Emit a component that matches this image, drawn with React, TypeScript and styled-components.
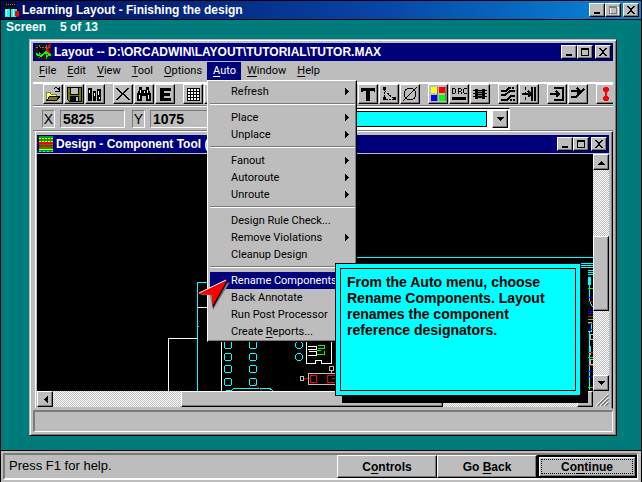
import React from "react";
import styled, { createGlobalStyle, css } from "styled-components";

const silver = "#bdbdbd";
const shade = "#7b7b7b";
const navy = "#00007b";
const teal = "#007b7b";
const aqua = "#00ffff";
const menuFont = 'Roboto, "Liberation Sans", sans-serif';

const GlobalStyle = createGlobalStyle`
  * { box-sizing: border-box; }
  body { margin: 0; background: #000; font-family: "Liberation Sans", Arial, sans-serif; color: #000; }
  button, input, select { font: inherit; color: inherit; border-radius: 0; margin: 0; }
  u { text-underline-offset: 2px; }
`;

const raised = css`
  background: ${silver};
  border: 1px solid;
  border-color: #fff #000 #000 #fff;
  box-shadow: inset -1px -1px 0 ${shade};
`;
const sunken = css`
  border: 1px solid;
  border-color: ${shade} #fff #fff ${shade};
`;

const Page = styled.div`
  position: relative;
  display: flex;
  flex-direction: column;
  min-height: 100vh;
  border: 1px solid #000;
  background: ${teal};
  overflow: hidden;
`;

const TitleBar = styled.header<{ $app?: boolean }>`
  display: flex;
  align-items: center;
  gap: 3px;
  height: 18px;
  flex: none;
  padding: 0 2px;
  color: #fff;
  background: ${(p) => (p.$app ? "linear-gradient(90deg, #000a5c, #0846a8 60%, #0888d8)" : navy)};
`;
const TitleText = styled.h1`
  flex: 1;
  min-width: 0;
  margin: 0;
  font-size: 12px;
  line-height: 18px;
  font-weight: bold;
  white-space: nowrap;
  overflow: hidden;
`;
const CaptionButtons = styled.div`
  display: flex;
  flex: none;
`;
const CaptionButton = styled.button<{ $apart?: boolean }>`
  ${raised}
  display: grid;
  place-items: center;
  width: 16px;
  height: 14px;
  padding: 0;
  margin-left: ${(p) => (p.$apart ? "2px" : "0")};
`;
const Glyph = styled.svg`
  display: block;
  flex: none;
  shape-rendering: crispEdges;
`;

const Desk = styled.main`
  display: flex;
  flex-direction: column;
  flex: 1;
  padding: 0 24px 14px 28px;
  border-top: 1px solid #000;
`;
const ScreenLabel = styled.p`
  display: flex;
  gap: 14px;
  margin: 0 0 0 -23px;
  height: 19px;
  color: #fff;
  font-size: 12px;
  line-height: 15px;
  font-weight: bold;
`;
const MainWindow = styled.section`
  display: flex;
  flex-direction: column;
  flex: 1;
  min-width: 0;
  padding: 3px;
  background: ${silver};
  border: 1px solid;
  border-color: ${silver} #000 #000 ${silver};
  box-shadow: inset 1px 1px 0 #fff, inset -1px -1px 0 ${shade};
`;

const MenuBar = styled.nav`
  display: flex;
  align-items: flex-start;
  height: 21px;
  padding-top: 1px;
  font-family: ${menuFont};
  font-size: 11px;
`;
const MenuSlot = styled.div`
  position: relative;
`;
const MenuTitle = styled.button<{ $open?: boolean }>`
  display: block;
  height: 18px;
  padding: 0 5px 0 6px;
  border: 0;
  line-height: 18px;
  background: ${(p) => (p.$open ? navy : "transparent")};
  color: ${(p) => (p.$open ? "#fff" : "#000")};
`;
const Dropdown = styled.div`
  position: absolute;
  z-index: 2;
  left: 0;
  top: 100%;
  width: 150px;
  padding: 2px 1px 1px 2px;
  ${raised}
`;
const MenuItem = styled.button<{ $active?: boolean }>`
  display: flex;
  align-items: center;
  justify-content: space-between;
  width: 100%;
  height: 17px;
  padding: 0 4px 0 21px;
  border: 0;
  text-align: left;
  white-space: nowrap;
  line-height: 17px;
  background: ${(p) => (p.$active ? navy : "transparent")};
  color: ${(p) => (p.$active ? "#fff" : "#000")};
`;
const MenuRule = styled.hr`
  height: 2px;
  margin: 3px 0 4px;
  border: 0;
  border-top: 1px solid ${shade};
  border-bottom: 1px solid #fff;
`;
const Pointer = styled.svg`
  position: absolute;
  left: -13px;
  top: 196px;
  overflow: visible;
`;

const Toolbar = styled.div`
  display: flex;
  gap: 7px;
  padding: 0 0 1px 10px;
  overflow: hidden;
  border-top: 2px solid #fff;
  border-bottom: 1px solid ${shade};
`;
const ToolGroup = styled.div`
  display: flex;
  flex: none;
  gap: 1px;
  padding-right: 1px;
`;
const ToolButton = styled.button`
  ${raised}
  display: grid;
  place-items: center;
  width: 20px;
  height: 20px;
  padding: 0;
`;

const Coordinates = styled.div`
  display: flex;
  align-items: center;
  height: 25px;
  padding-left: 9px;
  border-top: 1px solid #fff;
  border-bottom: 1px solid ${shade};
`;
const AxisLabel = styled.label`
  ${sunken}
  width: 13px;
  height: 18px;
  margin-right: 5px;
  font-size: 14px;
  line-height: 16px;
  text-align: center;
`;
const AxisInput = styled.input`
  ${sunken}
  width: 65px;
  height: 18px;
  margin-right: 7px;
  padding: 0 2px;
  background: transparent;
  font-size: 14px;
  font-weight: bold;
`;
const LayerBox = styled.div`
  display: flex;
  flex: none;
  width: 288px;
  height: 22px;
  padding: 1px;
  background: #fff;
  border: 1px solid;
  border-color: #000 #fff #fff #000;
`;
const LayerSelect = styled.select`
  flex: 1;
  min-width: 0;
  margin: 1px 5px 1px 1px;
  appearance: none;
  border: 1px solid #000;
  background: ${aqua};
  padding: 0 4px;
`;
const DropArrow = styled.span`
  ${raised}
  display: grid;
  place-items: center;
  width: 16px;
`;

const ChildWindow = styled.section`
  display: flex;
  flex-direction: column;
  flex: 1;
  min-height: 0;
  margin: 0 0 1px 1px;
  padding: 3px 3px 1px 2px;
  border: 1px solid;
  border-color: #fff #000 ${silver} ${silver};
  box-shadow: inset 1px 0 0 #fff, inset -1px 0 0 ${shade};
`;
const Workspace = styled.div`
  display: grid;
  flex: 1;
  min-height: 0;
  grid-template: minmax(0, 1fr) 16px / minmax(0, 1fr) 16px;
  margin-top: 1px;
`;
const Board = styled.svg`
  display: block;
  width: 100%;
  height: 100%;
  min-height: 200px;
  background: #000;
  shape-rendering: crispEdges;
`;
const Scrollbar = styled.div<{ $vertical?: boolean }>`
  display: flex;
  flex-direction: ${(p) => (p.$vertical ? "column" : "row")};
  background: repeating-conic-gradient(#fff 0 25%, ${silver} 0 50%) 0 0 / 2px 2px;
`;
const ScrollButton = styled.button`
  ${raised}
  display: grid;
  place-items: center;
  flex: none;
  width: 16px;
  height: 16px;
  padding: 0;
`;
const ScrollSpace = styled.span<{ $part: number }>`
  flex: ${(p) => p.$part} 1 0;
`;
const ScrollThumb = styled.span<{ $part: number }>`
  ${raised}
  flex: ${(p) => p.$part} 1 0;
`;
const WindowStatus = styled.div`
  height: 22px;
  border: 1px solid;
  border-width: 2px 1px 1px 2px;
  border-color: ${shade} #fff #fff ${shade};
`;

const Callout = styled.aside`
  position: absolute;
  z-index: 3;
  left: 334px;
  top: 262px;
  width: 246px;
  height: 133px;
  padding: 4px;
  border: 1px solid #000;
  background: ${aqua};
  box-shadow: 7px 7px 0 #000;
`;
const CalloutText = styled.p`
  height: 100%;
  margin: 0;
  padding: 5px 0 0 6px;
  border: 1px solid #000;
  font-size: 14px;
  line-height: 16px;
  font-weight: bold;
  white-space: nowrap;
`;

const Footer = styled.footer`
  padding: 2px 3px 2px 2px;
  background: ${silver};
  border-top: 1px solid #000;
`;
const FooterPanel = styled.div`
  display: flex;
  height: 27px;
  border: 2px solid;
  border-color: ${shade} #fff #fff ${shade};
  border-right-width: 1px;
`;
const Hint = styled.span`
  flex: 1;
  padding-left: 4px;
  font-size: 13px;
  line-height: 22px;
`;
const PushButton = styled.button<{ $default?: boolean }>`
  ${raised}
  width: 100px;
  height: 23px;
  padding: 0;
  font-size: 12px;
  line-height: 18px;
  font-weight: bold;
  ${(p) =>
    p.$default &&
    css`
      border: 2px solid #000;
      box-shadow: inset 1px 1px 0 #fff, inset -1px -1px 0 ${shade};
      outline: 1px dotted #000;
      outline-offset: -5px;
    `}
`;

function Captions({ maximized = false }: { maximized?: boolean }) {
  return (
    <CaptionButtons>
      <CaptionButton aria-label="Minimize">
        <Glyph width="12" height="10"><path d="M3 7h6v2H3z" /></Glyph>
      </CaptionButton>
      <CaptionButton aria-label="Maximize" disabled={maximized}>
        <Glyph width="12" height="10">
          {maximized && <path d="M3 2h8v8H3z" fill="none" stroke="#fff" />}
          <path d="M2 1h8v1H2zM2 1h1v8H2zM9 1h1v8H9zM2 8h8v1H2zM2 2h8v1H2z" fill={maximized ? shade : "#000"} />
        </Glyph>
      </CaptionButton>
      <CaptionButton $apart aria-label="Close">
        <Glyph width="12" height="10">
          <path d="M2 1h2v1h1v1h2V2h1V1h2v1H9v1H8v1H7v2h1v1h1v1h1v1H8V8H7V7H5v1H4v1H2V8h1V7h1V6h1V4H4V3H3V2H2z" />
        </Glyph>
      </CaptionButton>
    </CaptionButtons>
  );
}

function Arrow({ dir }: { dir: "left" | "right" | "up" | "down" }) {
  const shapes = {
    left: "M6 1h1v7H6zM5 2h1v5H5zM4 3h1v3H4zM3 4h1v1H3z",
    right: "M3 1h1v7H3zM4 2h1v5H4zM5 3h1v3H5zM6 4h1v1H6z",
    up: "M1 6h7v1H1zM2 5h5v1H2zM3 4h3v1H3zM4 3h1v1H4z",
    down: "M1 3h7v1H1zM2 4h5v1H2zM3 5h3v1H3zM4 6h1v1H4z",
  };
  return <Glyph width="9" height="9" fill="currentColor"><path d={shapes[dir]} /></Glyph>;
}

const toolDrawings: Record<string, React.ReactNode> = {
  Open: <><path d="M1 6h4l1 2h5v3H5l-3 4H1z" fill="#ffff5a" stroke={shade} /><path d="M5 10h10l-3 4H2z" fill="#7b7b00" stroke="#000" /><path d="M9 3q3-3 5 1M14 1v4h-4" fill="none" stroke="#000" /></>,
  Save: <><path d="M1 1h14v14H3l-2-2z" fill="#7b7b00" stroke="#000" /><path d="M4 1h8v7H4z" fill={silver} stroke="#000" /><path d="M4 10h9v5H4z" /><path d="M10 11h2v4h-2z" fill={silver} /></>,
  Library: <><path d="M1 2h4v13H1zM6 5h3v10H6zM10 3h4v12h-4z" /><path d="M2 4h1v3H2zM7 7h1v3H7zM11 5h1v4h-1zM12 11h1v2h-1z" fill="#fff" /></>,
  Delete: <path d="M1 2h2v1h1v1h1v1h1v1h1v1h1V6h1V5h1V4h1V3h1V2h2v1h-1v1h-1v1h-1v1h-1v1H9v1h1v1h1v1h1v1h1v1h1v1h1v1h-2v-1h-1v-1h-1v-1h-1v-1H9V9H7v1H6v1H5v1H4v1H3v1H1v-1h1v-1h1v-1h1v-1h1V9h1V7H5V6H4V5H3V4H2V3H1z" />,
  Find: <><path d="M3 1h3v3h4V1h3v3l2 4v7h-5v-5H6v5H1V8l2-4z" /><path d="M4.500 4v3M11.500 4v3M3.500 9v4M12.500 9v4M8 5v2" stroke="#fff" /></>,
  Edit: <path d="M3 2h11v3H7v2h6v3H7v2h7v3H3z" />,
  Spreadsheet: <><path d="M2 2h12v12H2z" fill="#fff" /><path d="M2 2.500h12M2 5.500h12M2 8.500h12M2 11.500h12M2 14.500h13M2.500 2v12M5.500 2v12M8.500 2v12M11.500 2v12M14.500 2v12" stroke="#000" /></>,
  Zoom: <path d="M2 2h8v8H2zM10 10l5 5" fill="none" stroke="#000" />,
  Text: <path d="M1 2h14v4h-1L13 5h-3v10H6V5H3L2 6H1z" />,
  Connection: <><path d="M3 3v10h10L3 4" fill="none" stroke="#000" strokeDasharray="2 1" /><path d="M2 1h3v3H2zM2 11h3v3H2zM12 11h3v3h-3z" /></>,
  Error: <><circle cx="8" cy="8" r="6" fill="none" stroke="#000" /><path d="M1 15L15 1" stroke="#000" /></>,
  Color: <><path d="M1 1h6v6H1z" fill="#ff0" /><path d="M9 1h6v6H9z" fill="red" /><path d="M1 9h6v6H1z" fill="#00f" /><path d="M9 9h6v6H9z" fill="#0f0" /><path d="M7.500 1v14M15.500 1v14" stroke={shade} /></>,
  DRC: <><path d="M1 2h3v1H2v4h2v1H1zM4 3h1v4H4zM7 2h3v1H8v2h2v1H8v2H7zM10 3h1v2h-1zM10 6h1v2h-1zM12 3h1v4h-1zM13 2h3v1h-3zM13 7h3v1h-3z" /><path d="M1 11h14v3H1z" /></>,
  Reconnect: <><path d="M3 3h3v1h4V3h3v1h2v1h-2v2h2v1h-2v2h2v1h-2v2h-3v-1H6v1H3v-2H1v-1h2V8H1V7h2V5H1V4h2z" /><path d="M6 5.500h4M6 7.500h4M6 9.500h4" stroke={shade} /></>,
  Autopath: <><path d="M1 5h5l3-3h2M1 9h4l5-4h5M1 14h6l4-4h4" fill="none" stroke="#000" strokeWidth="2" /><path d="M12 2h3M10 14h5" stroke="#000" strokeWidth="2" strokeDasharray="2 1" /></>,
  Shove: <><path d="M4.500 1v14" stroke="#000" strokeDasharray="3 2" /><path d="M1 8h10M11 1v14M14 1v14M7 5l3 3-3 3" fill="none" stroke="#000" strokeWidth="2" /></>,
  "Edit segment": <path d="M1 8h9M7 5l3 3-3 3M5 2h9v12H5" fill="none" stroke="#000" strokeWidth="2" />,
  Segment: <path d="M1 5h8M7 2l3 3-3 3M1 11h5l8-8" fill="none" stroke="#000" strokeWidth="2" />,
  Refresh: <path d="M6 1h4v1h1v3h-1v1H9v4h1v1h1v3h-1v1H6v-1H5v-3h1v-1h1V6H6V5H5V2h1z" fill="red" />,
};

const toolGroups = [
  ["Open", "Save", "Library"],
  ["Delete", "Find", "Edit"],
  ["Spreadsheet", "Zoom", "Text", "Find", "Edit"],
  ["Color", "Save", "Zoom", "Text", "Connection", "Error"],
  ["Color", "DRC", "Reconnect"],
  ["Autopath", "Shove"],
  ["Edit segment", "Segment"],
  ["Refresh"],
];

type Entry = { label: React.ReactNode; more?: boolean; active?: boolean };
const autoMenu: Entry[][] = [
  [{ label: "Refresh", more: true }],
  [{ label: "Place", more: true }, { label: "Unplace", more: true }],
  [{ label: "Fanout", more: true }, { label: "Autoroute", more: true }, { label: "Unroute", more: true }],
  [{ label: "Design Rule Check..." }, { label: "Remove Violations", more: true }, { label: "Cleanup Design" }],
  [
    { label: "Rename Components", active: true },
    { label: "Back Annotate" },
    { label: "Run Post Processor" },
    { label: <>Create <u>R</u>eports...</> },
  ],
];

function AutoMenu() {
  return (
    <Dropdown role="menu" aria-label="Auto">
      {autoMenu.map((group, g) => (
        <React.Fragment key={g}>
          {g > 0 && <MenuRule />}
          {group.map((item, i) => (
            <MenuItem key={i} role="menuitem" $active={item.active}>
              <span>{item.label}</span>
              {item.more && <Arrow dir="right" />}
            </MenuItem>
          ))}
        </React.Fragment>
      ))}
      <Pointer width="36" height="34" aria-hidden="true">
        <path d="M35 5L5 18h10l3 15z" fill={shade} />
        <path d="M33 4L18 31l-1-13z" fill="#000" />
        <path d="M32 3L2 17l15 1 0 12z" fill="red" />
        <path d="M31 3L4 16" stroke="#fff" />
      </Pointer>
    </Dropdown>
  );
}

function DesignBoard() {
  return (
    <Board viewBox="37 154 556 237" preserveAspectRatio="xMinYMin slice" role="img" aria-label="Board design" fill="none">
      <g stroke={aqua}>
        <path d="M207 282.500H197.500V391M198 326.500h1M356 257.500h237" />
        {[228, 253].map((x) => [345, 357, 369, 382].map((y) => <circle key={`${x}-${y}`} cx={x} cy={y} r="4" />))}
        <circle cx="299" cy="345" r="3.500" /><circle cx="299" cy="357" r="3.500" />
        <path d="M226 390.500h5l3-2h36l4 3M581 263.500h12M581 265.500h12M581 267.500h12M587 270.500h6M587 272.500h6M587 274.500h6" />
        <path d="M588 277v8M590.500 277v8M589.500 277v24l3 6M587.500 322h4v9h-4zM589.500 331v59M589.500 346v9M590.500 346v9" />
      </g>
      <g stroke="#fff">
        <path d="M198 307.500h9M197 338.500h-28.500V391M221.500 341v50" />
        <path d="M306.500 341v22h9v-3h6v3h10v-22M308 346.500h8v3h-8M308 355.500h8v-4h-7" />
      </g>
      <path d="M318 345.500h6v3h-6M324 350.500v4h-7M317 350.500h4M587 288.500h6M587 319.500h6M587 357.500h6M587 387.500h6" stroke="#0f0" />
      <path d="M587 297.500h6M587 311.500h6M587 313.500h6M587 329.500h6M587 371.500h6M587 376.500h6" stroke="#00f" />
      <path d="M587 301.500h6M587 316.500h6M587 323.500h6M587 352.500h6M587 365.500h6M304 378.500h7M254 383l8 8M310.500 375.500h6v7h-6zM327.500 375.500h8v7h-8zM332 378.500h5" stroke="red" />
      <path d="M308.500 373.500h30v11h-30zM329.500 366.500h4v4h-4zM331.500 370v3M300.500 376.500h3v4h-3zM590.500 334.500h4v5h-4zM590.500 359.500h4v5h-4z" stroke="#bdbdbd" />
    </Board>
  );
}

const menusBefore: [string, string][] = [["F", "ile"], ["E", "dit"], ["V", "iew"], ["T", "ool"], ["O", "ptions"]];
const menusAfter: [string, string][] = [["W", "indow"], ["H", "elp"]];

function MenuButton({ parts }: { parts: [string, string] }) {
  return <MenuTitle><u>{parts[0]}</u>{parts[1]}</MenuTitle>;
}

export default function App() {
  return (
    <>
      <GlobalStyle />
      <Page>
        <TitleBar $app>
          <Glyph width="16" height="16">
            <path d="M1 1h12v4H1z" fill="#101010" /><path d="M3 2h9" stroke={shade} strokeDasharray="1 1" />
            <path d="M1 6h6l1 1 1-1h5v9H9l-1 1-1-1H1z" fill={aqua} stroke="#000" /><path d="M3 7v7M10 7v7" stroke="#fff" />
            <path d="M7.500 6v9" stroke="#000" /><path d="M12 9h4v5h-1v1h-2v-1h-1z" fill="red" />
          </Glyph>
          <TitleText>Learning Layout - Finishing the design</TitleText>
          <Captions maximized />
        </TitleBar>
        <Desk>
          <ScreenLabel><span>Screen</span><span>5 of 13</span></ScreenLabel>
          <MainWindow>
            <TitleBar>
              <Glyph width="16" height="16">
                <path d="M0 0h16v16H0z" fill="#181818" /><path d="M1 3h14M1 9h14M4 1v14M11 1v14" stroke={shade} strokeDasharray="2 1" />
                <path d="M3 2l8 7-4 1-4-3z" fill="#000" /><path d="M15 0l-3 6 3 4" fill="none" stroke="red" strokeWidth="2" />
                <path d="M1 10l5 2 5-4 4 3-4 1" fill="none" stroke="#0f0" strokeWidth="2" /><path d="M1 14h5v1H1z" fill="#00f" />
              </Glyph>
              <TitleText as="h2">Layout -- D:\ORCADWIN\LAYOUT\TUTORIAL\TUTOR.MAX</TitleText>
              <Captions />
            </TitleBar>
            <MenuBar>
              {menusBefore.map((m) => <MenuButton key={m[1]} parts={m} />)}
              <MenuSlot>
                <MenuTitle $open aria-haspopup="menu" aria-expanded="true"><u>A</u>uto</MenuTitle>
                <AutoMenu />
              </MenuSlot>
              {menusAfter.map((m) => <MenuButton key={m[1]} parts={m} />)}
            </MenuBar>
            <Toolbar role="toolbar">
              {toolGroups.map((group, g) => (
                <ToolGroup key={g}>
                  {group.map((name, i) => (
                    <ToolButton key={i} aria-label={name}><Glyph width="16" height="16">{toolDrawings[name]}</Glyph></ToolButton>
                  ))}
                </ToolGroup>
              ))}
            </Toolbar>
            <Coordinates>
              <AxisLabel htmlFor="x">X</AxisLabel>
              <AxisInput id="x" defaultValue="5825" />
              <AxisLabel htmlFor="y">Y</AxisLabel>
              <AxisInput id="y" defaultValue="1075" />
              <LayerBox>
                <LayerSelect aria-label="Layer" />
                <DropArrow><Arrow dir="down" /></DropArrow>
              </LayerBox>
            </Coordinates>
            <ChildWindow>
              <TitleBar>
                <Glyph width="14" height="16">
                  <path d="M0 0h14v16H0z" fill="#00a000" /><path d="M0 2h14M0 5h14" stroke="#ff0" strokeDasharray="2 1" />
                  <path d="M0 7h14M0 10h14" stroke="red" strokeWidth="2" /><path d="M0 13h14" stroke="#ff0" /><path d="M0 15h14" stroke={aqua} strokeDasharray="2 2" />
                </Glyph>
                <TitleText as="h2">Design - Component Tool (</TitleText>
                <Captions />
              </TitleBar>
              <Workspace>
                <DesignBoard />
                <Scrollbar $vertical>
                  <ScrollButton aria-label="Scroll up"><Arrow dir="up" /></ScrollButton>
                  <ScrollSpace $part={67} /><ScrollThumb $part={73} /><ScrollSpace $part={65} />
                  <ScrollButton aria-label="Scroll down"><Arrow dir="down" /></ScrollButton>
                </Scrollbar>
                <Scrollbar>
                  <ScrollButton aria-label="Scroll left"><Arrow dir="left" /></ScrollButton>
                  <ScrollSpace $part={128} /><ScrollThumb $part={261} /><ScrollSpace $part={135} />
                  <ScrollButton aria-label="Scroll right"><Arrow dir="right" /></ScrollButton>
                </Scrollbar>
                <Glyph width="16" height="16">
                  <path d="M4 15L15 4M8 15l7-7M12 15l3-3" stroke={shade} strokeWidth="2" />
                  <path d="M3 15L15 3M7 15l8-8M11 15l4-4" stroke="#fff" />
                </Glyph>
              </Workspace>
            </ChildWindow>
            <WindowStatus />
          </MainWindow>
        </Desk>
        <Footer>
          <FooterPanel>
            <Hint>Press F1 for help.</Hint>
            <PushButton>C<u>o</u>ntrols</PushButton>
            <PushButton>Go <u>B</u>ack</PushButton>
            <PushButton $default>Co<u>n</u>tinue</PushButton>
          </FooterPanel>
        </Footer>
        <Callout>
          <CalloutText>
            From the Auto menu, choose<br />Rename Components. Layout<br />renames the component<br />reference designators.
          </CalloutText>
        </Callout>
      </Page>
    </>
  );
}
